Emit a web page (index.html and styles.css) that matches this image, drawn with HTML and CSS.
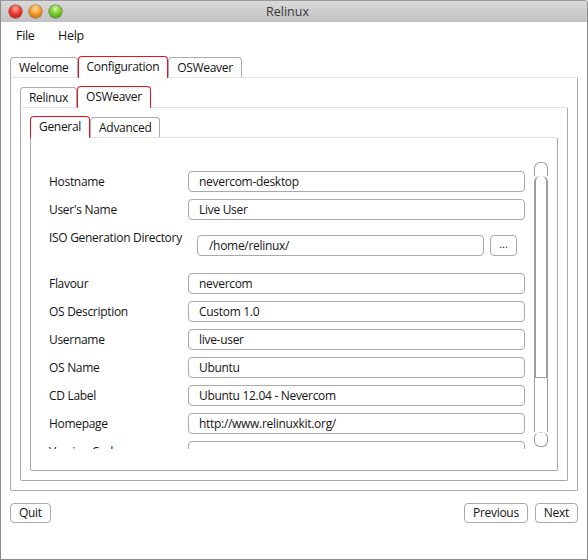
FILE: index.html
```html
<!DOCTYPE html>
<html>
<head>
<meta charset="utf-8">
<link rel="stylesheet" href="styles.css">
</head>
<body>
<div class="window">
  <div class="titlebar">
    <div class="lights">
      <span class="light red"></span>
      <span class="light orange"></span>
      <span class="light green"></span>
    </div>
    <div class="title">Relinux</div>
  </div>
  <div class="menubar">
    <span class="menu-item file">File</span>
    <span class="menu-item">Help</span>
  </div>
  <div class="main">
    <div class="tabbar">
      <div class="tab">Welcome</div>
      <div class="tab sel">Configuration</div>
      <div class="tab">OSWeaver</div>
    </div>
    <div class="pane pane-outer">
      <div class="tabbar">
        <div class="tab">Relinux</div>
        <div class="tab sel">OSWeaver</div>
      </div>
      <div class="pane pane-mid">
        <div class="tabbar">
          <div class="tab sel">General</div>
          <div class="tab">Advanced</div>
        </div>
        <div class="pane pane-inner">
          <div class="scrollarea">
            <div class="viewport">
              <div class="form">
                <div class="row"><div class="label">Hostname</div><div class="field"><div class="input">nevercom-desktop</div></div></div>
                <div class="row"><div class="label">User's Name</div><div class="field"><div class="input">Live User</div></div></div>
                <div class="row row-iso"><div class="label">ISO Generation Directory</div><div class="field field-iso"><div class="input input-iso">/home/relinux/</div><div class="browse">...</div></div></div>
                <div class="row"><div class="label">Flavour</div><div class="field"><div class="input">nevercom</div></div></div>
                <div class="row"><div class="label">OS Description</div><div class="field"><div class="input">Custom 1.0</div></div></div>
                <div class="row"><div class="label">Username</div><div class="field"><div class="input">live-user</div></div></div>
                <div class="row"><div class="label">OS Name</div><div class="field"><div class="input">Ubuntu</div></div></div>
                <div class="row"><div class="label">CD Label</div><div class="field"><div class="input">Ubuntu 12.04 - Nevercom</div></div></div>
                <div class="row"><div class="label">Homepage</div><div class="field"><div class="input">http://www.relinuxkit.org/</div></div></div>
                <div class="row"><div class="label">Version Code</div><div class="field"><div class="input"></div></div></div>
              </div>
            </div>
            <div class="scrollbar">
              <div class="sb-cap"></div>
              <div class="sb-slider"></div>
              <div class="sb-track"></div>
              <div class="sb-cap sb-cap-bottom"></div>
            </div>
          </div>
        </div>
      </div>
    </div>
    <div class="buttons">
      <div class="btn">Quit</div>
      <div class="spacer"></div>
      <div class="btn">Previous</div>
      <div class="btn">Next</div>
    </div>
  </div>
</div>
</body>
</html>
```

FILE: styles.css
```css
* { box-sizing: border-box; }
html, body { margin: 0; padding: 0; background: #fff; }
body {
  font-family: "Open Sans", "DejaVu Sans", sans-serif;
  font-size: 12px;
  letter-spacing: -0.3px;
  color: #141414;
}
.window {
  width: 588px;
  height: 560px;
  border: 1px solid #8c8c8c;
  border-top: none;
  border-top-right-radius: 3px;
  display: flex;
  flex-direction: column;
  background: #fff;
}
.titlebar {
  height: 22px;
  flex: none;
  background: linear-gradient(#d9d9d9, #c2c2c2);
  border-top: 1px solid #9a9a9a;
  border-top-right-radius: 3px;
  display: flex;
  align-items: center;
}
.lights {
  display: flex;
  gap: 7px;
  padding-left: 8px;
}
.light {
  width: 13px;
  height: 13px;
  border-radius: 50%;
  display: block;
}
.light.red {
  background: radial-gradient(circle at 50% 30%, #ffb0a8 0, #f03a2e 45%, #a8120c 100%);
  box-shadow: 0 0 0 0.5px #7a1a14;
}
.light.orange {
  background: radial-gradient(circle at 50% 30%, #ffe2a8 0, #f59a2a 45%, #b25c08 100%);
  box-shadow: 0 0 0 0.5px #8a5010;
}
.light.green {
  background: radial-gradient(circle at 50% 30%, #d8f8a8 0, #7ccc2c 45%, #3e8a10 100%);
  box-shadow: 0 0 0 0.5px #3a6a18;
}
.title {
  flex: 1;
  text-align: center;
  padding-right: 74px;
  font-size: 12.5px;
  color: #383838;
  line-height: 20px;
  letter-spacing: 0;
}
.menubar {
  height: 26px;
  flex: none;
  display: flex;
  align-items: center;
  padding-left: 15px;
  padding-top: 1px;
  font-size: 12.5px;
}
.menu-item.file { width: 42px; }
.main {
  flex: 1;
  display: flex;
  flex-direction: column;
  padding: 8px 9px 0 9px;
}
.tabbar {
  display: flex;
  align-items: flex-end;
  height: 21px;
  flex: none;
}
.tab {
  height: 20px;
  border: 1px solid #ababab;
  border-bottom: none;
  border-radius: 4px 4px 0 0;
  padding: 0 8px;
  line-height: 19px;
  background: #fff;
  white-space: nowrap;
}
.tab.sel {
  height: 22px;
  margin-bottom: -1px;
  border-color: #e8121c;
  position: relative;
  z-index: 1;
  line-height: 19px;
}
.pane {
  border: 1px solid #a8a8a8;
  border-top-color: #e2e2e2;
  border-radius: 0 2px 2px 2px;
  display: flex;
  flex-direction: column;
  padding: 8px 9px 9px 9px;
}
.pane-outer { height: 414px; flex: none; }
.pane-mid { flex: 1; }
.pane-inner {
  flex: 1;
  padding: 24px 9px 21px 9px;
}
.scrollarea {
  flex: 1;
  display: flex;
  align-items: flex-start;
  min-height: 0;
}
.viewport {
  flex: 1;
  overflow: hidden;
  height: 287px;
}
.form {
  padding: 9px 9px 0 9px;
}
.row {
  display: grid;
  grid-template-columns: 139px 1fr;
  height: 21px;
  margin-bottom: 7px;
}
.row.row-iso { height: 39px; }
.label {
  line-height: 21px;
  white-space: nowrap;
}
.field { display: flex; }
.field-iso {
  padding: 8px 8px 0 9px;
  gap: 6px;
  align-items: flex-start;
}
.input {
  flex: 1;
  height: 21px;
  border: 1px solid #a9a9a9;
  border-radius: 4px;
  padding-left: 10px;
  line-height: 19px;
  white-space: nowrap;
  overflow: hidden;
}
.input-iso { padding-left: 11px; }
.browse {
  width: 27px;
  height: 21px;
  border: 1px solid #a9a9a9;
  border-radius: 4px;
  text-align: center;
  line-height: 15px;
  font-size: 11px;
  letter-spacing: 0;
  flex: none;
}
.scrollbar {
  width: 14px;
  flex: none;
  height: 285px;
  display: flex;
  flex-direction: column;
}
.sb-cap {
  height: 14px;
  border: 1px solid #9c9c9c;
  border-bottom: none;
  border-radius: 6px 6px 0 0;
}
.sb-slider {
  height: 202px;
  border: 1px solid #9c9c9c;
  border-top: none;
  border-left-width: 2px;
  border-right-width: 2px;
  border-left-style: double;
  border-right-style: double;
  border-radius: 6px 6px 0 0;
}
.sb-track {
  flex: 1;
  border-left: 1px solid #9c9c9c;
  border-right: 1px solid #9c9c9c;
}
.sb-cap-bottom {
  height: 15px;
  border: 1px solid #9c9c9c;
  border-top: 1px dotted #bbb;
  border-radius: 6px;
}
.buttons {
  display: flex;
  margin-top: 12px;
  gap: 7px;
}
.spacer { flex: 1; }
.btn {
  height: 20px;
  border: 1px solid #a9a9a9;
  border-radius: 4px;
  padding: 0 8px;
  line-height: 18px;
  font-size: 12px;
}
```
